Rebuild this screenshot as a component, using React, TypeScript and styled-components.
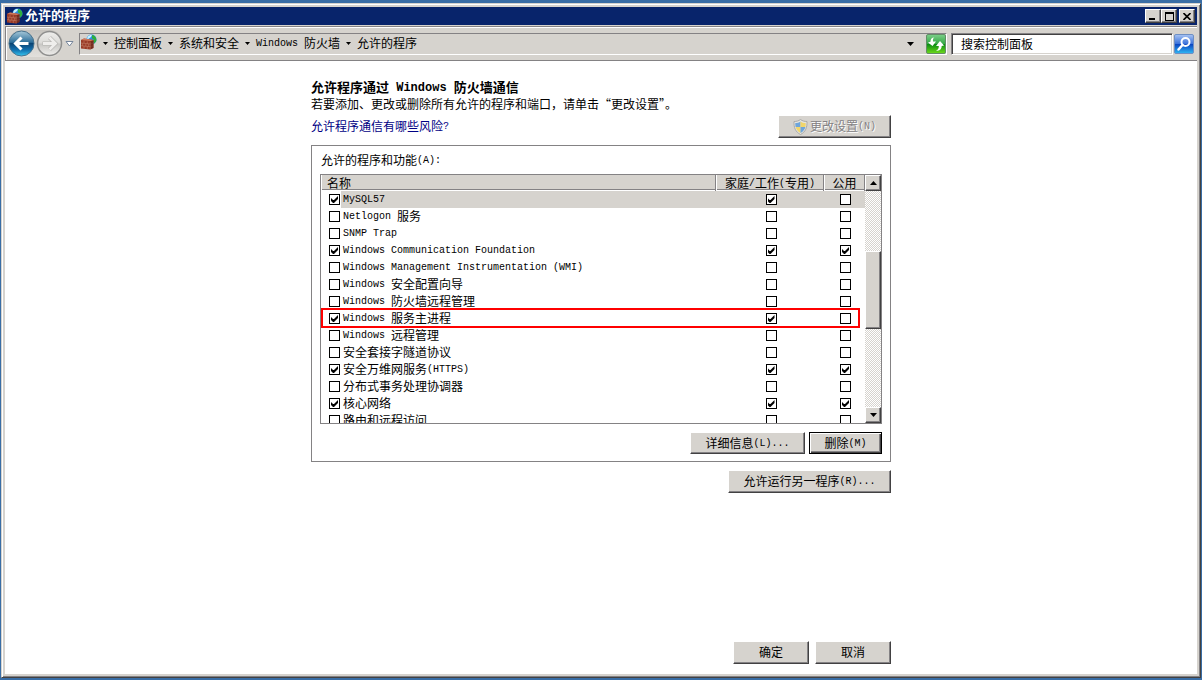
import React, { useState } from "react";
import styled, { createGlobalStyle, css } from "styled-components";

const face = "#d6d3ce";
const shade = "#848284";
const dark = "#424142";
const light = "#ffffff";

const GlobalStyle = createGlobalStyle`
  *, *::before, *::after { box-sizing: border-box; }
  body {
    margin: 0;
    background: #396da5;
    color: #000;
    font: 12px/17px "Noto Sans CJK SC", sans-serif;
  }
  button, input, table { font: inherit; color: inherit; }
  button { padding: 0; }
  a { text-decoration: none; }
`;

const Desktop = styled.div`
  display: flex;
  min-height: 100vh;
  padding: 3px 1px 2px;
`;

const Window = styled.div`
  flex: 1;
  min-width: 0;
  display: flex;
  flex-direction: column;
  padding: 3px;
  border: 1px solid;
  border-color: ${face} ${dark} ${dark} ${face};
  background: ${face};
  box-shadow: inset 1px 1px ${light}, inset -1px -1px ${shade};
`;

const TitleBar = styled.header`
  display: flex;
  align-items: center;
  height: 18px;
  padding: 0 2px;
  background: #08246b;
  color: #fff;
`;

const WindowTitle = styled.h1`
  flex: 1;
  margin: 0 0 2px 2px;
  font-size: 13px;
  line-height: 18px;
  font-weight: 700;
`;

const raised = css`
  border: 1px solid;
  border-color: ${light} ${dark} ${dark} ${light};
  background: ${face};
  box-shadow: inset -1px -1px ${shade};
`;

const CaptionButton = styled.button<{ $apart?: boolean }>`
  ${raised}
  display: grid;
  place-items: center;
  width: 16px;
  height: 14px;
  margin-left: ${(p) => (p.$apart ? "2px" : "0")};
`;

const Toolbar = styled.nav`
  display: flex;
  align-items: center;
  height: 35px;
  margin-top: 1px;
  padding: 0 3px 0 2px;
  border: 1px solid ${shade};
  border-right-width: 0;
  box-shadow: inset 1px 1px ${light};
`;

const History = styled.div`
  display: flex;
  align-items: center;
  width: 71px;
  height: 28px;
`;

const HistoryPair = styled.div`
  display: flex;
  gap: 1px;
  border-radius: 14px;
  background: linear-gradient(#c6c3be, #e2e0dc);
`;

const PlainButton = styled.button`
  display: grid;
  place-items: center;
  border: 0;
  background: none;
`;

const DropButton = styled(PlainButton)`
  width: 12px;
  height: 20px;
`;

const AddressBar = styled.div`
  flex: 1;
  display: flex;
  align-items: center;
  height: 22px;
  padding-left: 1px;
  border: 1px solid;
  border-color: ${shade} ${light} ${light} ${shade};
`;

const AddressIcon = styled.span`
  display: flex;
  margin-bottom: 4px;
`;

const Crumbs = styled.div`
  flex: 1;
  display: flex;
  align-items: center;
`;

const Crumb = styled.a`
  margin-bottom: 2px;
  color: #000;
  white-space: nowrap;
`;

const CrumbArrow = styled(PlainButton)`
  width: 17px;
  height: 18px;
`;

const AddressDrop = styled(PlainButton)`
  width: 32px;
  height: 18px;
`;

const SearchBox = styled.form`
  display: flex;
  align-items: center;
  gap: 1px;
  margin-left: 4px;
`;

const SearchInput = styled.input`
  width: 222px;
  height: 22px;
  padding: 0 9px;
  border: 1px solid;
  border-color: ${shade} ${light} ${light} ${shade};
  border-radius: 0;
  outline: 0;
  background: #fff;
  box-shadow: inset 1px 1px ${dark}, inset -1px -1px ${face};
  &::placeholder { color: #000; opacity: 1; }
`;

const Page = styled.main`
  flex: 1;
  display: flex;
  flex-direction: column;
  align-items: center;
  padding: 17px 16px 10px;
  background: #fff;
`;

const Column = styled.div`
  flex: 1;
  display: flex;
  flex-direction: column;
  width: 100%;
  max-width: 580px;
`;

const Heading = styled.h2`
  margin: 0;
  font-size: 13px;
  line-height: 17px;
  font-weight: 700;
`;

const Intro = styled.p`
  margin: 0;
`;

const LinkRow = styled.div`
  display: flex;
  align-items: center;
  justify-content: space-between;
  margin: 3px 0 7px;
`;

const HelpLink = styled.a`
  margin-bottom: 2px;
  color: #000084;
`;

const PushButton = styled.button<{ $width: number; $short?: boolean; $default?: boolean }>`
  ${raised}
  display: flex;
  align-items: center;
  justify-content: center;
  gap: 2px;
  width: ${(p) => p.$width}px;
  height: ${(p) => (p.$short ? 22 : 23)}px;
  &:disabled {
    color: ${shade};
    text-shadow: 1px 1px #fff;
  }
  ${(p) =>
    p.$default &&
    css`
      border-color: #000;
      box-shadow: inset 1px 1px ${light}, inset -1px -1px ${dark}, inset -2px -2px ${shade};
    `}
`;

const ButtonRow = styled.div<{ $gap: number }>`
  display: flex;
  justify-content: flex-end;
  gap: ${(p) => p.$gap}px;
`;

const Footer = styled(ButtonRow)`
  margin-top: auto;
  padding-top: 16px;
`;

const GroupBox = styled.section`
  margin-bottom: 8px;
  padding: 5px 8px 7px;
  border: 1px solid ${shade};
`;

const GroupLabel = styled.div`
  padding-left: 1px;
  margin-bottom: 6px;
`;

const ListBox = styled.div`
  display: flex;
  height: 250px;
  margin-bottom: 8px;
  border: 1px solid ${shade};
  overflow: hidden;
`;

const ListView = styled.div`
  flex: 1;
  overflow: hidden;
`;

const Table = styled.table`
  width: 100%;
  table-layout: fixed;
  border-collapse: separate;
  border-spacing: 0;
`;

const HeadCell = styled.th<{ $width?: number }>`
  width: ${(p) => (p.$width ? p.$width + "px" : "auto")};
  height: 16px;
  padding: 0 0 0 ${(p) => (p.$width ? 0 : 5)}px;
  border: solid ${shade};
  border-width: 0 1px 0 0;
  border-left: 1px solid ${light};
  background: linear-gradient(${face} 14px, ${shade} 14px, ${shade} 15px, #fff 15px);
  font-weight: 400;
  line-height: 16px;
  text-align: ${(p) => (p.$width ? "center" : "left")};
  white-space: nowrap;
`;

const Row = styled.tr<{ $selected?: boolean; $marked?: boolean }>`
  position: relative;
  td { background: ${(p) => (p.$selected ? face : "#fff")}; }
  td:first-child {
    background: ${(p) => (p.$selected ? `linear-gradient(90deg, #fff 20px, ${face} 20px)` : "#fff")};
  }
  ${(p) =>
    p.$marked &&
    css`
      z-index: 1;
      td:first-child::after {
        content: "";
        position: absolute;
        inset: -2px 5px -1px 0;
        border: 2px solid #f00;
        pointer-events: none;
      }
    `}
`;

const NameCell = styled.td`
  height: 17px;
  padding: 0 0 0 8px;
  overflow: hidden;
`;

const NameLabel = styled.label`
  display: flex;
  align-items: center;
  gap: 3px;
  height: 17px;
  white-space: pre;
`;

const CheckCell = styled.td`
  height: 17px;
  padding: 3px 0 3px 2px;
`;

const Check = styled.input`
  appearance: none;
  display: block;
  flex: none;
  width: 11px;
  height: 11px;
  margin: 0 auto;
  border: 1px solid #000;
  background: #fff;
  ${NameLabel} & { margin: 0; }
  &:checked::after {
    content: "";
    display: block;
    width: 7px;
    height: 7px;
    margin: 1px;
    background: #000;
    clip-path: polygon(0 2px, 2px 4px, 3px 4px, 7px 0, 7px 3px, 3px 7px, 2px 7px, 0 5px);
  }
`;

const ScrollBar = styled.div`
  display: grid;
  grid-template-rows: 16px 1fr 16px;
  width: 16px;
`;

const ScrollButton = styled.button`
  ${raised}
  display: grid;
  place-items: center;
`;

const Track = styled.div`
  display: grid;
  grid-template-rows: 60fr 78fr 78fr;
  background: repeating-conic-gradient(${face} 0 25%, #fff 0 50%) 0 0 / 2px 2px;
`;

const Thumb = styled.div`
  ${raised}
  grid-row: 2;
`;

/* The bottom margin only counts where the text is a flex item beside a box or an icon. */
const MixedText = styled.span`
  margin-bottom: 2px;
`;

const HalfWidth = styled.span<{ $bold?: boolean }>`
  font-family: "Liberation Mono", monospace;
  font-size: ${(p) => (p.$bold ? 12 : 10)}px;
  line-height: 10px;
  vertical-align: ${(p) => (p.$bold ? 1 : 2)}px;
  white-space: pre;
`;

/* Latin runs take half the advance of a Chinese character. */
function Mixed({ text, bold }: { text: string; bold?: boolean }) {
  return (
    <MixedText>
      {text.split(/([\x20-\x7e]+)/).map((part, i) =>
        i % 2 ? <HalfWidth key={i} $bold={bold}>{part}</HalfWidth> : part
      )}
    </MixedText>
  );
}

function FirewallIcon() {
  return (
    <svg width="16" height="16" viewBox="0 0 16 16" aria-hidden="true">
      <circle cx="10.5" cy="5.5" r="5" fill="#2b8fe0" />
      <path d="M6.5 3C8 1 9.5 .7 11 1l-1 2-2 1.5L6 6z" fill="#c9f2ff" />
      <path d="M11 1c3 .3 4.8 3 4.3 6l-2 2.6-1.6-2L13 5.500l-2-1z" fill="#2fae3c" />
      <path d="M0 6l3-1.500 9.500 1.500V14L9 15.500 0 14.500z" fill="#9a3a26" />
      <path d="M0 6l3-1.500 9.500 1.500-3 1z" fill="#cf7a5c" />
      <path d="M0 9l9.300 1 3.200-1M0 11.700l9.300 1 3.200-1M9.300 8v7.500M3 6.800v2.400M6.300 7.300v2.400M1.600 9.200v2.600M4.800 9.600v2.600M7.600 9.900v2.600M3 12v2.800M6.300 12.400v2.700" stroke="#c98a72" strokeWidth=".5" fill="none" />
      <path d="M9.500 7.500l3-1v7.500l-3 1.500z" fill="#5d2119" opacity=".6" />
    </svg>
  );
}

function ShieldIcon() {
  return (
    <svg width="15" height="16" viewBox="0 0 15 16" aria-hidden="true">
      <path d="M7.500.5C9.500 2 11.500 2.500 14 2.500c.3 6-1.500 10.500-6.500 13C2.500 13 .7 8.500 1 2.500c2.500 0 4.500-.5 6.500-2z" fill="#e4e4e0" stroke="#aaa9a6" />
      <path d="M7.500 2.400V8H2.600C2.300 6.500 2.200 5 2.300 3.900c2 0 3.700-.5 5.200-1.500z" fill="#6fa5da" />
      <path d="M7.500 2.400V8h4.900c.3-1.500.4-3 .3-4.100-2 0-3.700-.5-5.200-1.500z" fill="#f1d66b" />
      <path d="M7.500 14V8H2.600c.8 2.700 2.400 4.700 4.900 6z" fill="#f1d66b" />
      <path d="M7.500 14V8h4.900c-.8 2.700-2.400 4.700-4.900 6z" fill="#6fa5da" />
    </svg>
  );
}

function Arrow({ up, size = 7 }: { up?: boolean; size?: 5 | 7 | 9 }) {
  const h = (size + 1) / 2;
  const d = up ? `M0 ${h}L${size / 2} 0L${size} ${h}z` : `M0 0H${size}L${size / 2} ${h}z`;
  return (
    <svg width={size} height={h} viewBox={`0 0 ${size} ${h}`} aria-hidden="true">
      <path d={d} fill="#000" />
    </svg>
  );
}

function BackIcon() {
  return (
    <svg width="27" height="27" viewBox="0 0 27 27" aria-hidden="true">
      <defs>
        <linearGradient id="back" x1="0" y1="0" x2="0" y2="1">
          <stop offset="0" stopColor="#a7c8d9" />
          <stop offset=".45" stopColor="#2d6f9b" />
          <stop offset=".5" stopColor="#0b4473" />
          <stop offset=".75" stopColor="#116fae" />
          <stop offset="1" stopColor="#35c5ef" />
        </linearGradient>
      </defs>
      <circle cx="13.500" cy="13.500" r="12.500" fill="url(#back)" stroke="#47718c" />
      <path d="M13.500 7.500l-6 6 6 6M8 13.500h12.500" stroke="#fff" strokeWidth="3" fill="none" />
    </svg>
  );
}

function ForwardIcon() {
  return (
    <svg width="27" height="27" viewBox="0 0 27 27" aria-hidden="true">
      <defs>
        <linearGradient id="forward" x1="0" y1="0" x2="0" y2="1">
          <stop offset="0" stopColor="#eeeeec" />
          <stop offset=".48" stopColor="#dcdbd8" />
          <stop offset=".52" stopColor="#c8c7c4" />
          <stop offset="1" stopColor="#efeeec" />
        </linearGradient>
      </defs>
      <circle cx="13.500" cy="13.500" r="12" fill="url(#forward)" stroke="#8f8f8e" strokeWidth="1.500" />
      <path d="M13.500 7.500l6 6-6 6M19 13.500H6.500" stroke="#b4b3b0" strokeWidth="4" fill="none" />
      <path d="M13.500 7.500l6 6-6 6M19 13.500H7" stroke="#efeeec" strokeWidth="2.800" fill="none" />
    </svg>
  );
}

function RefreshIcon() {
  return (
    <svg width="20" height="20" viewBox="0 0 20 20" aria-hidden="true">
      <defs>
        <linearGradient id="refresh" x1="0" y1="0" x2="0" y2="1">
          <stop offset="0" stopColor="#7ccf8a" />
          <stop offset=".48" stopColor="#35a845" />
          <stop offset=".52" stopColor="#0c8d14" />
          <stop offset="1" stopColor="#6fdc1a" />
        </linearGradient>
      </defs>
      <rect x=".5" y=".5" width="19" height="19" rx="1.500" fill="url(#refresh)" stroke="#628d66" />
      <path d="M8.500 3.500C7 4 6.800 5.500 7 7.500H10L6.500 12 2 8.500l2.500-.7C4.300 5.500 5.500 3.500 8.500 3.500z" fill="#fff" />
      <path d="M10 16.500c2-.3 2.800-2 2.800-4.500H10l4-5 4 4.500-2.300.5c0 3-2 5.500-5.700 4.500z" fill="#fff" />
    </svg>
  );
}

function SearchIcon() {
  return (
    <svg width="20" height="20" viewBox="0 0 20 20" aria-hidden="true">
      <defs>
        <linearGradient id="search" x1="0" y1="0" x2="0" y2="1">
          <stop offset="0" stopColor="#a9c4f2" />
          <stop offset=".48" stopColor="#3d74dc" />
          <stop offset=".52" stopColor="#0b45c0" />
          <stop offset="1" stopColor="#2fb8f4" />
        </linearGradient>
      </defs>
      <rect x=".5" y=".5" width="19" height="19" rx="1.500" fill="url(#search)" stroke="#6e8fc4" />
      <circle cx="11.500" cy="8" r="4" fill="none" stroke="#fff" strokeWidth="2" />
      <path d="M8.500 11l-4 4.500" stroke="#fff" strokeWidth="2.500" strokeLinecap="round" />
    </svg>
  );
}

const crumbs = ["控制面板", "系统和安全", "Windows 防火墙", "允许的程序"];

type Program = { name: string; on: boolean; home: boolean; open: boolean; selected?: boolean; marked?: boolean };

const initialPrograms: Program[] = [
  { name: "MySQL57", on: true, home: true, open: false, selected: true },
  { name: "Netlogon 服务", on: false, home: false, open: false },
  { name: "SNMP Trap", on: false, home: false, open: false },
  { name: "Windows Communication Foundation", on: true, home: true, open: true },
  { name: "Windows Management Instrumentation (WMI)", on: false, home: false, open: false },
  { name: "Windows 安全配置向导", on: false, home: false, open: false },
  { name: "Windows 防火墙远程管理", on: false, home: false, open: false },
  { name: "Windows 服务主进程", on: true, home: true, open: false, marked: true },
  { name: "Windows 远程管理", on: false, home: false, open: false },
  { name: "安全套接字隧道协议", on: false, home: false, open: false },
  { name: "安全万维网服务(HTTPS)", on: true, home: true, open: true },
  { name: "分布式事务处理协调器", on: false, home: false, open: false },
  { name: "核心网络", on: true, home: true, open: true },
  { name: "路由和远程访问", on: false, home: false, open: false },
];

export default function App() {
  const [programs, setPrograms] = useState(initialPrograms);
  const toggle = (index: number, key: "on" | "home" | "open") =>
    setPrograms((list) => list.map((p, i) => (i === index ? { ...p, [key]: !p[key] } : p)));

  return (
    <Desktop lang="zh-CN">
      <GlobalStyle />
      <Window>
        <TitleBar>
          <FirewallIcon />
          <WindowTitle>允许的程序</WindowTitle>
          <CaptionButton aria-label="最小化">
            <svg width="8" height="8" aria-hidden="true"><path d="M0 6h6v2H0z" /></svg>
          </CaptionButton>
          <CaptionButton aria-label="最大化">
            <svg width="9" height="9" aria-hidden="true"><path d="M0 0h9v9H0zM1 2v6h7V2z" fillRule="evenodd" /></svg>
          </CaptionButton>
          <CaptionButton aria-label="关闭" $apart>
            <svg width="8" height="7" aria-hidden="true"><path d="M.5 0l7 7M7.500 0l-7 7" stroke="#000" strokeWidth="1.600" /></svg>
          </CaptionButton>
        </TitleBar>

        <Toolbar>
          <History>
            <HistoryPair>
              <PlainButton aria-label="后退"><BackIcon /></PlainButton>
              <PlainButton aria-label="前进"><ForwardIcon /></PlainButton>
            </HistoryPair>
            <DropButton aria-label="最近的页面">
              <svg width="9" height="6" aria-hidden="true"><path d="M1 .5h7L4.500 5z" fill="#fff" stroke="#77869b" /></svg>
            </DropButton>
          </History>
          <AddressBar>
            <AddressIcon><FirewallIcon /></AddressIcon>
            <Crumbs>
              {crumbs.map((name) => (
                <React.Fragment key={name}>
                  <CrumbArrow aria-label="展开"><Arrow size={5} /></CrumbArrow>
                  <Crumb href="#"><Mixed text={name} /></Crumb>
                </React.Fragment>
              ))}
            </Crumbs>
            <AddressDrop aria-label="以前的位置"><Arrow size={7} /></AddressDrop>
            <PlainButton aria-label="刷新"><RefreshIcon /></PlainButton>
          </AddressBar>
          <SearchBox onSubmit={(e) => e.preventDefault()}>
            <SearchInput aria-label="搜索控制面板" placeholder="搜索控制面板" />
            <PlainButton aria-label="搜索"><SearchIcon /></PlainButton>
          </SearchBox>
        </Toolbar>

        <Page>
          <Column>
            <Heading><Mixed bold text="允许程序通过 Windows 防火墙通信" /></Heading>
            <Intro>若要添加、更改或删除所有允许的程序和端口，请单击“更改设置”。</Intro>
            <LinkRow>
              <HelpLink href="#"><Mixed text="允许程序通信有哪些风险?" /></HelpLink>
              <PushButton $width={113} disabled>
                <ShieldIcon />
                <Mixed text="更改设置(N)" />
              </PushButton>
            </LinkRow>

            <GroupBox aria-labelledby="programs-label">
              <GroupLabel id="programs-label"><Mixed text="允许的程序和功能(A):" /></GroupLabel>
              <ListBox>
                <ListView>
                  <Table>
                    <thead>
                      <tr>
                        <HeadCell scope="col">名称</HeadCell>
                        <HeadCell scope="col" $width={108}><Mixed text="家庭/工作(专用)" /></HeadCell>
                        <HeadCell scope="col" $width={41}>公用</HeadCell>
                      </tr>
                    </thead>
                    <tbody>
                      {programs.map((p, i) => (
                        <Row key={p.name} $selected={p.selected} $marked={p.marked}>
                          <NameCell>
                            <NameLabel>
                              <Check type="checkbox" checked={p.on} onChange={() => toggle(i, "on")} />
                              <Mixed text={p.name} />
                            </NameLabel>
                          </NameCell>
                          <CheckCell>
                            <Check type="checkbox" aria-label={`${p.name} 家庭/工作(专用)`} checked={p.home} onChange={() => toggle(i, "home")} />
                          </CheckCell>
                          <CheckCell>
                            <Check type="checkbox" aria-label={`${p.name} 公用`} checked={p.open} onChange={() => toggle(i, "open")} />
                          </CheckCell>
                        </Row>
                      ))}
                    </tbody>
                  </Table>
                </ListView>
                <ScrollBar>
                  <ScrollButton aria-label="向上滚动"><Arrow up /></ScrollButton>
                  <Track><Thumb /></Track>
                  <ScrollButton aria-label="向下滚动"><Arrow /></ScrollButton>
                </ScrollBar>
              </ListBox>
              <ButtonRow $gap={4}>
                <PushButton $width={115} $short><Mixed text="详细信息(L)..." /></PushButton>
                <PushButton $width={73} $short $default><Mixed text="删除(M)" /></PushButton>
              </ButtonRow>
            </GroupBox>
            <ButtonRow $gap={6}>
              <PushButton $width={163}><Mixed text="允许运行另一程序(R)..." /></PushButton>
            </ButtonRow>
            <Footer $gap={6}>
              <PushButton $width={76}><Mixed text="确定" /></PushButton>
              <PushButton $width={76}><Mixed text="取消" /></PushButton>
            </Footer>
          </Column>
        </Page>
      </Window>
    </Desktop>
  );
}
